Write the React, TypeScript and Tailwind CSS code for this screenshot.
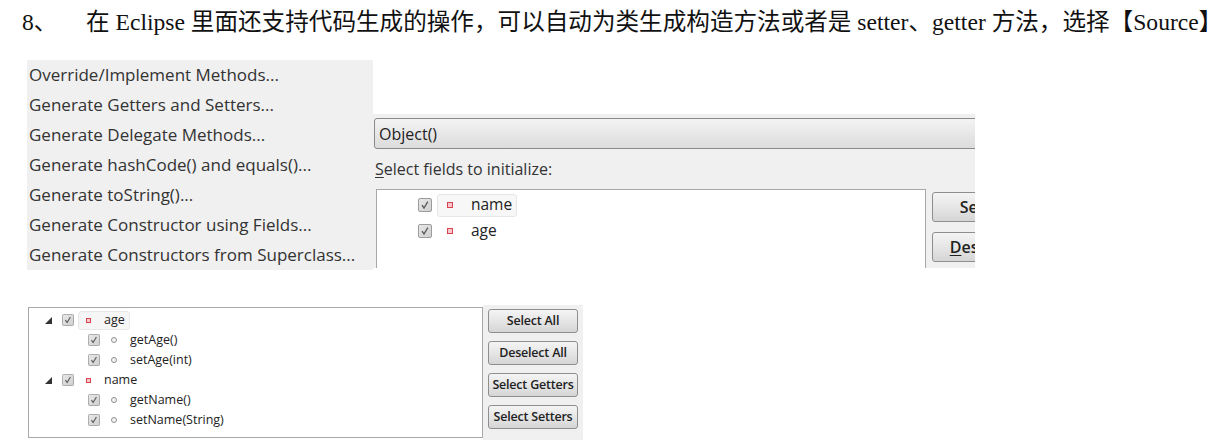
import React from "react";

const ui = { fontFamily: '"Open Sans", "Noto Sans", sans-serif' };
const serif = { fontFamily: '"Liberation Serif", "Noto Sans CJK SC", serif' };

function Check({ size = 14 }: { size?: number }) {
  return (
    <svg width={size} height={size} viewBox="0 0 14 14" className="shrink-0">
      <defs>
        <linearGradient id="cbg" x1="0" y1="0" x2="1" y2="1">
          <stop offset="0" stopColor="#e9e9e9" />
          <stop offset="1" stopColor="#cfcfcf" />
        </linearGradient>
      </defs>
      <rect x="0.5" y="0.5" width="13" height="13" rx="1.5" fill="url(#cbg)" stroke="#9c9c9c" />
      <path d="M4 7.2 L6 10 L9.8 3.6" fill="none" stroke="#5a5a5a" strokeWidth="1.3" />
    </svg>
  );
}

function FieldIcon({ size = 6 }: { size?: number }) {
  return (
    <span
      className="inline-block shrink-0 border border-[#d9434f] bg-[#f7c9cf]"
      style={{ width: size, height: size }}
    />
  );
}

function MethodIcon() {
  return <span className="inline-block shrink-0 w-[6px] h-[6px] rounded-full border border-[#8f8f8f] bg-[#f4f4f4]" />;
}

function Tri() {
  return (
    <svg width="7" height="7" viewBox="0 0 7 7" className="shrink-0">
      <path d="M7 0 L7 7 L0 7 Z" fill="#333" />
    </svg>
  );
}

const menu = [
  "Override/Implement Methods...",
  "Generate Getters and Setters...",
  "Generate Delegate Methods...",
  "Generate hashCode() and equals()...",
  "Generate toString()...",
  "Generate Constructor using Fields...",
  "Generate Constructors from Superclass...",
];

function WinButton({ children, className = "" }: { children: React.ReactNode; className?: string }) {
  return (
    <div
      className={
        "flex shrink-0 items-center justify-center rounded-[3px] border border-[#8e8e8e] bg-gradient-to-b from-[#f4f4f4] via-[#e6e6e6] to-[#d5d5d5] text-[#222] " +
        className
      }
    >
      {children}
    </div>
  );
}

export default function App() {
  return (
    <div className="w-[1230px] h-[447px] bg-white overflow-hidden relative">
      {/* Title */}
      <div className="h-[60px] flex items-start pt-[7px] pl-[22px] text-[23.6px] leading-[30px] text-[#111] whitespace-nowrap" style={serif}>
        <span className="w-[64px] shrink-0">8、</span>
        <span>在 Eclipse 里面还支持代码生成的操作，可以自动为类生成构造方法或者是 setter、getter 方法，选择【Source】</span>
      </div>

      {/* Top block */}
      <div className="flex pl-[27px] h-[210px]">
        <div className="w-[346px] h-[210px] bg-[#f0f0f0] flex flex-col" style={ui}>
          {menu.map((m) => (
            <div key={m} className="h-[30px] shrink-0 flex items-center pl-[2px] text-[17px] text-[#333] whitespace-nowrap">
              {m}
            </div>
          ))}
        </div>
        <div className="w-[602px] flex flex-col">
          <div className="h-[54px] shrink-0 bg-white" />
          <div className="h-[154px] shrink-0 bg-[#f0f0f0] overflow-hidden flex flex-col pt-[4px]" style={ui}>
            <div className="h-[31px] shrink-0 w-[610px] ml-[1px] rounded-[3px] border border-[#8a8a8a] bg-gradient-to-b from-[#f3f3f3] to-[#dcdcdc] flex items-center pl-[4px] text-[16px] text-[#222]">
              Object()
            </div>
            <div className="h-[40px] shrink-0 flex items-center pl-[2px] text-[16px] text-[#333]">
              <span className="underline underline-offset-2">S</span>elect fields to initialize:
            </div>
            <div className="flex gap-[6px] pl-[3px] shrink-0">
              <div className="w-[550px] h-[90px] shrink-0 bg-white border border-[#a8a8a8] border-b-0 pt-[2px]">
                <div className="h-[26px] flex items-center pl-[41px]">
                  <Check size={14} />
                  <div className="ml-[5px] h-[23px] w-[80px] rounded-[3px] border border-[#e6e6e6] bg-[#f7f7f7] flex items-center pl-[9px]">
                    <FieldIcon />
                    <span className="ml-[18px] text-[15.5px] text-[#222]">name</span>
                  </div>
                </div>
                <div className="h-[26px] flex items-center pl-[41px]">
                  <Check size={14} />
                  <div className="ml-[5px] h-[23px] flex items-center pl-[10px]">
                    <FieldIcon />
                    <span className="ml-[18px] text-[15.5px] text-[#222]">age</span>
                  </div>
                </div>
              </div>
              <div className="flex flex-col gap-[10px] pt-[3px]">
                <WinButton className="w-[125px] h-[30px] text-[16px] font-semibold">Select All</WinButton>
                <WinButton className="w-[125px] h-[30px] text-[16px] font-semibold">
                  <span className="underline underline-offset-2">D</span>eselect All
                </WinButton>
              </div>
            </div>
          </div>
        </div>
      </div>

      {/* Bottom block */}
      <div className="flex pl-[28px] mt-[35px]" style={ui}>
        <div className="w-[455px] h-[131px] mt-[2px] bg-white border border-[#a8a8a8] pt-[2px] text-[12.5px] text-[#222]">
          <div className="h-[20px] flex items-center pl-[16px]">
            <Tri />
            <span className="ml-[10px]"><Check size={12} /></span>
            <div className="ml-[4px] h-[19px] w-[52px] rounded-[3px] border border-[#e8e8e8] bg-[#f6f6f6] flex items-center pl-[7px]">
              <FieldIcon size={5} />
              <span className="ml-[13px]">age</span>
            </div>
          </div>
          <div className="h-[20px] flex items-center pl-[59px]">
            <Check size={12} />
            <span className="ml-[11px] flex"><MethodIcon /></span>
            <span className="ml-[13px]">getAge()</span>
          </div>
          <div className="h-[20px] flex items-center pl-[59px]">
            <Check size={12} />
            <span className="ml-[11px] flex"><MethodIcon /></span>
            <span className="ml-[13px]">setAge(int)</span>
          </div>
          <div className="h-[20px] flex items-center pl-[16px]">
            <Tri />
            <span className="ml-[10px]"><Check size={12} /></span>
            <div className="ml-[4px] h-[19px] flex items-center pl-[8px]">
              <FieldIcon size={5} />
              <span className="ml-[13px]">name</span>
            </div>
          </div>
          <div className="h-[20px] flex items-center pl-[59px]">
            <Check size={12} />
            <span className="ml-[11px] flex"><MethodIcon /></span>
            <span className="ml-[13px]">getName()</span>
          </div>
          <div className="h-[20px] flex items-center pl-[59px]">
            <Check size={12} />
            <span className="ml-[11px] flex"><MethodIcon /></span>
            <span className="ml-[13px]">setName(String)</span>
          </div>
        </div>
        <div className="w-[100px] h-[135px] bg-[#f0f0f0] flex flex-col gap-[8px] pt-[4px] pl-[5px]">
          {["Select All", "Deselect All", "Select Getters", "Select Setters"].map((b) => (
            <WinButton key={b} className="w-[90px] h-[24px] text-[12.5px] font-semibold whitespace-nowrap tracking-[-0.2px]">
              {b}
            </WinButton>
          ))}
        </div>
      </div>
    </div>
  );
}
